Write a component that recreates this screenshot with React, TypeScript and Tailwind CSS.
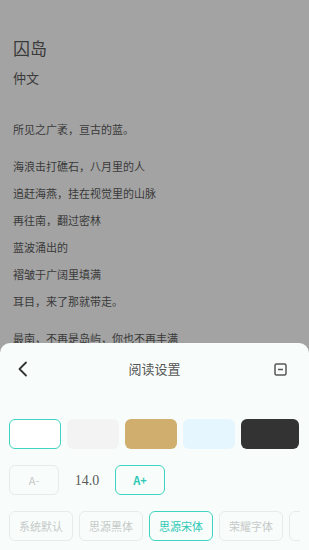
import React from 'react';

const lines = [
  '追赶海燕，挂在视觉里的山脉',
  '再往南，翻过密林',
  '蓝波涌出的',
  '褶皱于广阔里填满',
  '耳目，来了那就带走。',
];

const swatches = [
  'w-[52px] bg-white border border-[#3fd3c1]',
  'w-[52px] bg-[#f3f3f3]',
  'w-[52px] bg-[#cfae6e]',
  'w-[52px] bg-[#e5f6fe]',
  'w-[58px] bg-[#333333]',
];

// the fifth one is scrolled out of view, only its edge shows
const fonts = ['系统默认', '思源黑体', '思源宋体', '荣耀字体', ''];

export default function App() {
  const cjk = { fontFamily: '"Noto Sans CJK SC", "Noto Sans", sans-serif' };

  return (
    <div className="relative w-[309px] h-[550px] overflow-hidden bg-[#a3a3a3]" style={cjk}>
      {/* article behind the sheet */}
      <div className="pl-[13px] pt-[38px] text-[#3a3a3a]">
        <div className="text-[17px] leading-[20px]">囚岛</div>
        <div className="mt-[10px] text-[13px] leading-[20px]">仲文</div>
        <div className="mt-[28px] text-[11px] leading-[27px]">所见之广袤，亘古的蓝。</div>
        <div className="mt-[10px] text-[11px] leading-[27px]">海浪击打礁石，八月里的人</div>
        {lines.map((l) => (
          <div key={l} className="text-[11px] leading-[27px]">{l}</div>
        ))}
        <div className="mt-[10px] text-[11px] leading-[27px]">最南，不再是岛屿，你也不再丰满</div>
      </div>

      {/* reading settings sheet */}
      <div className="absolute left-0 right-0 top-[343px] bottom-0 rounded-t-[10px] bg-[#f8fdfb]">
        <div className="relative h-[52px] flex items-center justify-center">
          <svg className="absolute left-[17px] top-[18px]" width="12" height="16" viewBox="0 0 12 16">
            <polyline points="9,1.5 2.5,8 9,14.5" fill="none" stroke="#333" strokeWidth="1.8" strokeLinecap="round" strokeLinejoin="round" />
          </svg>
          <span className="text-[13px] text-[#555]">阅读设置</span>
          <svg className="absolute left-[274px] top-[20px]" width="13" height="13" viewBox="0 0 13 13">
            <rect x="1" y="1" width="11" height="11" rx="1.5" fill="none" stroke="#555" strokeWidth="1.5" />
            <line x1="4" y1="6.5" x2="9" y2="6.5" stroke="#555" strokeWidth="1.5" />
          </svg>
        </div>

        <div className="mt-[24px] pl-[9px] flex gap-[6px]">
          {swatches.map((s, i) => (
            <div key={i} className={`h-[30px] rounded-[6px] ${s}`} />
          ))}
        </div>

        <div className="mt-[16px] pl-[9px] flex items-center">
          <div className="w-[50px] h-[30px] rounded-[6px] border border-[#e6ecea] flex items-center justify-center text-[11px] text-[#c6c9c8]">
            A-
          </div>
          <div className="w-[56px] text-center text-[14px] text-[#5a5a5a]" style={{ fontFamily: '"Liberation Serif", serif' }}>
            14.0
          </div>
          <div className="w-[50px] h-[30px] rounded-[6px] border border-[#3fd3c1] flex items-center justify-center text-[11px] font-bold text-[#2fc9b5]">
            A+
          </div>
        </div>

        <div className="mt-[16px] ml-[9px] mr-[9px] overflow-hidden">
          <div className="flex gap-[6px] w-max">
            {fonts.map((f, i) => (
              <div
                key={i}
                className={
                  i === 2
                    ? 'w-[64px] h-[30px] rounded-[6px] border border-[#3fd3c1] flex items-center justify-center text-[11px] text-[#2fc9b5]'
                    : 'w-[64px] h-[30px] rounded-[6px] border border-[#e6ecea] flex items-center justify-center text-[11px] text-[#c6c9c8]'
                }
              >
                {f}
              </div>
            ))}
          </div>
        </div>
      </div>
    </div>
  );
}
